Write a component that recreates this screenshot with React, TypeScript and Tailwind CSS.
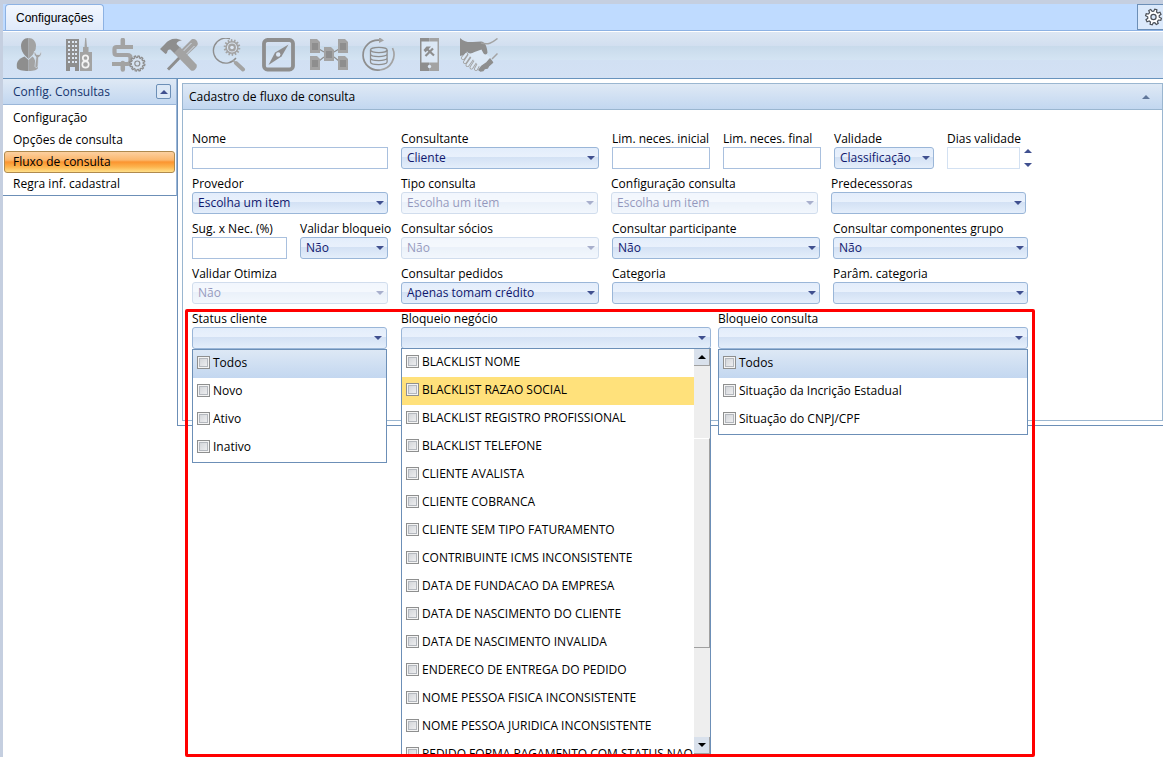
import { useState, type ReactNode } from 'react';
import clsx from 'clsx';

const DARK = '#8e8e8e';
const LIGHT = '#a3a3a3';

// Gear outline shared by the toolbar icons and the settings button
const gearPath = (cx: number, cy: number, outer: number, inner: number, teeth: number) => {
  const points: string[] = [];
  for (let i = 0; i < teeth; i++) {
    const base = (i / teeth) * Math.PI * 2;
    const step = (Math.PI * 2) / teeth;
    [
      [inner, 0.05],
      [outer, 0.2],
      [outer, 0.55],
      [inner, 0.7],
    ].forEach(([r, f]) => {
      const a = base + f * step;
      points.push(`${(cx + r * Math.cos(a)).toFixed(2)} ${(cy + r * Math.sin(a)).toFixed(2)}`);
    });
  }
  return `M${points.join('L')}Z`;
};

const ToolIcon = ({ children }: { children: ReactNode }) => (
  <svg width="38" height="34" viewBox="0 0 38 34" fill="none" aria-hidden="true">
    {children}
  </svg>
);

const docs = [
  [0, 1],
  [28, 1],
  [14, 9],
  [0, 18],
  [28, 18],
];

const tools: { name: string; icon: ReactNode }[] = [
  {
    name: 'Usuários',
    icon: (
      <ToolIcon>
        <path d="M18.500 0C14 0 11 3.500 11 8c0 4 2 7.500 4 9.500l3.500 3.500z" fill={DARK} />
        <path d="M18.500 0c4.500 0 7.500 3.500 7.500 8 0 4-2 7.500-4 9.500L18.500 21z" fill={LIGHT} />
        <path d="M18.500 33C12 33 8 32 7 30c-1-6 1-9 7.500-11.500l4 3.500z" fill={DARK} />
        <path d="M18.500 33c6 0 8.500-1 9.500-3l-4-10-1.500-1.500-4 3.500z" fill={LIGHT} />
        <path d="M24.500 13c-1 3 0 5 1.500 6l-1 9c0 2 2.500 2 3 0l.500-8.500c2.500-1 3.500-3.500 2.500-6.500l-1.500 3.500h-3z" fill={LIGHT} stroke="#d6e2f0" strokeWidth="0.700" />
      </ToolIcon>
    ),
  },
  {
    name: 'Empresas',
    icon: (
      <ToolIcon>
        <path d="M6 1h13v32h-4v-4h-5v4H6z" fill={DARK} />
        <path d="M20 14h3V9h1.500l.700-9h1l.800 9H28.500v5H32v19H20z" fill={LIGHT} />
        {[0, 1, 2, 3, 4, 5].map((row) =>
          [8, 12, 15].map((x) => (
            <rect key={`${row}-${x}`} x={x} y={3 + row * 4} width="2" height="2" fill="#dce6f2" />
          )),
        )}
        <circle cx="25.500" cy="20" r="2.700" stroke="#f4f4f4" strokeWidth="1.700" />
        <circle cx="25.500" cy="26.500" r="3.200" stroke="#f4f4f4" strokeWidth="1.700" />
      </ToolIcon>
    ),
  },
  {
    name: 'Financeiro',
    icon: (
      <ToolIcon>
        <path d="M12.800 2V8.500M12.800 25V31.500" stroke={LIGHT} strokeWidth="4.500" strokeLinecap="round" />
        <path d="M23 9H6.500Q4.500 9 4.500 11v3.500Q4.500 17 7 17h10.500Q20.500 17 20.500 19.500v3Q20.500 26 17.500 26H2" stroke={LIGHT} strokeWidth="4.200" />
        <path d={gearPath(27.3, 25.5, 7.6, 6, 12)} fill="#d6e2f0" stroke={DARK} strokeWidth="1.300" />
        <circle cx="27.300" cy="25.500" r="2.500" stroke={DARK} strokeWidth="1.200" />
      </ToolIcon>
    ),
  },
  {
    name: 'Ferramentas',
    icon: (
      <ToolIcon>
        <path d="M8 31.500 25 14" stroke={DARK} strokeWidth="3" />
        <path d="M19 14 31.500 1.500c3-1.500 6 1 6.300 4 0 1-.400 2-1 2.600L24 20z" fill={LIGHT} />
        <path d="m23 13.500 8.500-8.500M26 16.500l8.500-8.500" stroke="#d6e2f0" strokeWidth="0.900" />
        <path d="M0 11 5 6C9 1 15-1 22 2.500c-3 0-5 1.500-5.500 3.500l4 4-6 5.500-4-4c-2-.500-3 .500-3.500 3.500L5.500 16z" fill={DARK} />
        <path d="m14 15 6-6L36.500 26.500c1.500 3-2.500 7.500-5.500 6z" fill={LIGHT} />
      </ToolIcon>
    ),
  },
  {
    name: 'Pesquisa',
    icon: (
      <ToolIcon>
        <path d="M20 .800A12.500 12.500 0 1 0 26 20" stroke={DARK} strokeWidth="1.400" />
        <path d={gearPath(22, 9.5, 8.4, 6.4, 14)} fill={LIGHT} />
        <circle cx="22" cy="9.500" r="4.500" stroke="#dce6f2" strokeWidth="1.100" />
        <circle cx="22" cy="9.500" r="1.800" fill="#dce6f2" />
        <path d="m22.500 22 3 3" stroke={LIGHT} strokeWidth="1.500" />
        <path d="m26 25 7 6.500" stroke={LIGHT} strokeWidth="4" strokeLinecap="round" />
      </ToolIcon>
    ),
  },
  {
    name: 'Navegação',
    icon: (
      <ToolIcon>
        <rect x="4" y="2" width="29" height="29.500" rx="3.500" stroke={DARK} strokeWidth="3.800" />
        <path d="M8.500 27 15 14.500 28.500 6.500 21.500 18.500z" fill={DARK} />
        <circle cx="18.200" cy="16.500" r="2.200" fill="#dce8f5" />
      </ToolIcon>
    ),
  },
  {
    name: 'Fluxos',
    icon: (
      <ToolIcon>
        <path d="M9 11 14 14M24 14l5-3M9 23l5-4M24 19l5 4" stroke={DARK} strokeWidth="1.200" />
        {docs.map(([x, y]) => (
          <g key={`${x}-${y}`}>
            <path d={`M${x} ${y}h7l3 3v11H${x}z`} fill={LIGHT} />
            <path d={`M${x + 2} ${y + 4}h6v7h-6z`} fill={DARK} />
          </g>
        ))}
      </ToolIcon>
    ),
  },
  {
    name: 'Banco de dados',
    icon: (
      <ToolIcon>
        <path d="M19.500 2.200A15 15 0 1 0 20 32" stroke={DARK} strokeWidth="1.700" />
        <path d="M20 32A15.500 15.500 0 0 0 32.500 10" stroke={LIGHT} strokeWidth="1.700" />
        <path d="m19-1 5 3.500L19 5z" fill={LIGHT} />
        <ellipse cx="18.800" cy="12" rx="8.300" ry="2.600" stroke={DARK} strokeWidth="1.300" />
        <path d="M10.500 12v12c0 3.500 16.600 3.500 16.600 0V12M10.500 16c0 3.500 16.600 3.500 16.600 0M10.500 20c0 3.500 16.600 3.500 16.600 0" stroke={DARK} strokeWidth="1.300" />
      </ToolIcon>
    ),
  },
  {
    name: 'Dispositivos',
    icon: (
      <ToolIcon>
        <path d="M10 0h9.500v33H10z" fill={DARK} />
        <path d="M19.500 0H29v33h-9.500z" fill={LIGHT} />
        <path d="M11.500 3.500h16v21h-16z" fill="#dce8f5" />
        <circle cx="19.500" cy="28.500" r="1.700" fill="#dce8f5" />
        <path d="m15.500 18 7.500-7.500M16.500 10.500l7.500 7" stroke={DARK} strokeWidth="2.200" />
        <path d="m13.500 12 3-3.500h4.500l-5.500 6z" fill={DARK} />
      </ToolIcon>
    ),
  },
  {
    name: 'Parcerias',
    icon: (
      <ToolIcon>
        <path d="m6 16-3 4M9 18l-4 6M12.500 20 7.500 27M16 22.500 11.500 29.500M19 25.500 16 31" stroke={LIGHT} strokeWidth="4" strokeLinecap="round" />
        <path d="m6 16-3 4M9 18l-4 6M12.500 20 7.500 27M16 22.500 11.500 29.500M19 25.500 16 31" stroke="#dce8f5" strokeWidth="2.200" strokeLinecap="round" />
        <path d="M8 16 20 11l12 10-12 8z" fill="#dce8f5" />
        <path d="M0 0c4 3.500 8 4.500 13 4l8-.500c4 0 6 5 6.500 11-.500 2.500-3.500 2.500-4.500 0l-1.500-3-7 2.500c-3 2-6 2-7.500-.500L3.500 17 0 18z" fill={DARK} />
        <path d="M21 5c7 2 11 0 16.500-4.500M37.500 15.500 32 21" stroke={LIGHT} strokeWidth="1.500" />
        <path d="m19 32 3-4 5-3.500 3-3.500 2.500 3.500-4 3.500-1 2-3 .500-1.500 2-2.500.500z" fill={DARK} stroke={DARK} strokeWidth="1.500" strokeLinejoin="round" />
      </ToolIcon>
    ),
  },
];

const menuItems = ['Configuração', 'Opções de consulta', 'Fluxo de consulta', 'Regra inf. cadastral'];

const statusOptions = ['Todos', 'Novo', 'Ativo', 'Inativo'];

const businessOptions = [
  'BLACKLIST NOME',
  'BLACKLIST RAZAO SOCIAL',
  'BLACKLIST REGISTRO PROFISSIONAL',
  'BLACKLIST TELEFONE',
  'CLIENTE AVALISTA',
  'CLIENTE COBRANCA',
  'CLIENTE SEM TIPO FATURAMENTO',
  'CONTRIBUINTE ICMS INCONSISTENTE',
  'DATA DE FUNDACAO DA EMPRESA',
  'DATA DE NASCIMENTO DO CLIENTE',
  'DATA DE NASCIMENTO INVALIDA',
  'ENDERECO DE ENTREGA DO PEDIDO',
  'NOME PESSOA FISICA INCONSISTENTE',
  'NOME PESSOA JURIDICA INCONSISTENTE',
  'PEDIDO FORMA PAGAMENTO COM STATUS NAO',
];

const queryOptions = ['Todos', 'Situação da Incrição Estadual', 'Situação do CNPJ/CPF'];

const Arrow = ({ up = false, className = '' }: { up?: boolean; className?: string }) => (
  <svg width="8" height="4" viewBox="0 0 8 4" className={className} aria-hidden="true">
    <path d={up ? 'M0 4 4 0l4 4z' : 'M0 0h8L4 4z'} fill="currentColor" />
  </svg>
);

interface FieldProps {
  id: string;
  label: string;
  width: string;
}

const FieldLabel = ({ id, label }: { id: string; label: string }) => (
  <label htmlFor={id} className="block h-[15px] whitespace-nowrap leading-[14px]">
    {label}
  </label>
);

const TextField = ({ id, label, width }: FieldProps) => (
  <div className={width}>
    <FieldLabel id={id} label={label} />
    <input id={id} type="text" className="block h-[22px] w-full border border-[#a9c0de] bg-white px-1 outline-none" />
  </div>
);

const SelectField = ({ id, label, width, value = '', disabled = false }: FieldProps & { value?: string; disabled?: boolean }) => (
  <div className={width}>
    <FieldLabel id={id} label={label} />
    <div className={clsx('relative', disabled && 'opacity-45')}>
      <select
        id={id}
        disabled={disabled}
        defaultValue={value}
        className="block h-[22px] w-full appearance-none rounded-[3px] border border-[#9ab6d8] pl-[5px] text-[#10186e] opacity-100 outline-none [background-image:linear-gradient(#e3edfb,#e9f1fc_45%,#d3e1f4_46%,#e4eefb)]"
      >
        <option value={value}>{value}</option>
      </select>
      <Arrow className="pointer-events-none absolute top-[9px] right-1 text-[#40508f]" />
    </div>
  </div>
);

interface CheckListProps extends FieldProps {
  options: string[];
  headed?: boolean;
  highlighted?: string;
  scrolling?: boolean;
}

const CheckListField = ({ id, label, width, options, headed, highlighted, scrolling }: CheckListProps) => {
  const [checked, setChecked] = useState<string[]>([]);

  const toggle = (option: string) => {
    setChecked(checked.includes(option) ? checked.filter((item) => item !== option) : [...checked, option]);
  };

  return (
    <div className={clsx('relative', width)}>
      <FieldLabel id={id} label={label} />
      <button
        id={id}
        type="button"
        aria-haspopup="listbox"
        aria-expanded="true"
        className="flex h-[22px] w-full items-center justify-end rounded-[3px] border border-[#9ab6d8] pr-1 text-[#40508f] [background-image:linear-gradient(#e3edfb,#e9f1fc_45%,#d3e1f4_46%,#e4eefb)]"
      >
        <Arrow />
      </button>
      <div
        className={clsx(
          'absolute top-full left-0 z-10 flex w-full border border-[#6c8fb7] bg-white',
          scrolling && '-mt-px h-[408px] overflow-hidden',
        )}
      >
        <ul className="min-w-0 flex-1">
          {options.map((option, index) => (
            <li
              key={option}
              className={clsx(
                'h-7',
                headed && index === 0 && 'bg-linear-to-b from-[#dde8f5] to-[#c3d7f0]',
                option === highlighted && 'bg-[#ffe17b]',
              )}
            >
              <label className="flex h-[25px] items-center gap-[3px] pl-1 whitespace-nowrap">
                <input
                  type="checkbox"
                  checked={checked.includes(option)}
                  onChange={() => toggle(option)}
                  className="size-[13px] shrink-0 appearance-none border border-[#8e8f8f] bg-linear-to-br from-[#cdd0d5] to-[#f4f4f5] shadow-[inset_0_0_0_1px_#f4f4f4,inset_0_0_0_2px_#b4b8be] checked:bg-[#4b6ea8]"
                />
                {option}
              </label>
            </li>
          ))}
        </ul>
        {scrolling && (
          <div className="flex w-4 flex-col bg-[#eeeeee]">
            <span className="flex h-[17px] items-center justify-center border-r border-b border-[#a0a0a0] bg-[#d9e1ec] text-black">
              <Arrow up />
            </span>
            <span className="mt-[72px] h-[210px] border-t border-r border-b border-t-white border-r-[#a0a0a0] border-b-[#a0a0a0] bg-[#eeeeee]" />
            <span className="mt-[89px] flex h-[17px] items-center justify-center border-r border-b border-[#a0a0a0] bg-[#d9e1ec] text-black">
              <Arrow />
            </span>
          </div>
        )}
      </div>
    </div>
  );
};

const Toolbar = () => (
  <div className="flex h-12 border-t border-b border-t-white border-b-[#6893bd] pl-px [background-image:linear-gradient(#dde7f3,#d2dff0_30%,#c8daeb_31%,#d4e4f3_61%,#d1e0f3_62%,#d3e1f4)]">
    {tools.map((tool) => (
      <button key={tool.name} type="button" aria-label={tool.name} className="flex w-[50px] items-center justify-center">
        {tool.icon}
      </button>
    ))}
  </div>
);

const Sidebar = ({ active, onSelect }: { active: string; onSelect: (item: string) => void }) => (
  <aside className="w-[174px] shrink-0 self-start border-r border-b border-[#6c8fb7] border-r-[#9ab6d8]">
    <div className="flex h-[26px] items-center justify-between border-b border-[#9ab6d8] bg-linear-to-b from-[#dfe9f5] to-[#c2d7f0] pr-[5px] pl-[10px] text-[#15356e]">
      <span>Config. Consultas</span>
      <button
        type="button"
        aria-label="Recolher menu"
        className="flex size-[15px] items-center justify-center rounded-[2px] border border-[#6c8fb7] bg-[#dce8f6] text-[#40508f]"
      >
        <Arrow up />
      </button>
    </div>
    <nav className="px-px pt-[2px]">
      {menuItems.map((item) => (
        <a
          key={item}
          href="#"
          onClick={() => onSelect(item)}
          className={clsx(
            'block h-[22px] rounded-[3px] border pl-2 leading-5',
            item === active
              ? 'border-[#b08a4e] [background-image:linear-gradient(#fcd0a0,#fbb76d_40%,#fb9430_50%,#fdb54f_75%,#ffe08a)]'
              : 'border-transparent',
          )}
        >
          {item}
        </a>
      ))}
    </nav>
  </aside>
);

const QueryForm = () => (
  <form className="flex flex-col gap-2 pt-[22px] pb-[71px] pl-[9px]">
    <div className="flex gap-[13px]">
      <TextField id="nome" label="Nome" width="w-[196px]" />
      <SelectField id="consultante" label="Consultante" width="w-[198px]" value="Cliente" />
      <TextField id="lim-inicial" label="Lim. neces. inicial" width="w-[98px]" />
      <TextField id="lim-final" label="Lim. neces. final" width="w-[98px]" />
      <SelectField id="validade" label="Validade" width="w-[100px]" value="Classificação" />
      <div className="w-[84px]">
        <FieldLabel id="dias" label="Dias validade" />
        <div className="flex gap-1">
          <input id="dias" type="text" className="block h-[22px] w-[73px] border border-[#d3e1f2] bg-white px-1 outline-none" />
          <div className="flex flex-col justify-between py-[2px] text-[#40508f]">
            <button type="button" aria-label="Aumentar" className="flex">
              <Arrow up />
            </button>
            <button type="button" aria-label="Diminuir" className="flex">
              <Arrow />
            </button>
          </div>
        </div>
      </div>
    </div>
    <div className="flex gap-[13px]">
      <SelectField id="provedor" label="Provedor" width="w-[196px]" value="Escolha um item" />
      <SelectField id="tipo" label="Tipo consulta" width="w-[197px]" value="Escolha um item" disabled />
      <SelectField id="config" label="Configuração consulta" width="w-[207px]" value="Escolha um item" disabled />
      <SelectField id="predecessoras" label="Predecessoras" width="w-[195px]" />
    </div>
    <div className="flex gap-[13px]">
      <TextField id="sugestao" label="Sug. x Nec. (%)" width="w-[95px]" />
      <SelectField id="bloqueio" label="Validar bloqueio" width="w-[88px]" value="Não" />
      <SelectField id="socios" label="Consultar sócios" width="w-[198px]" value="Não" disabled />
      <SelectField id="participante" label="Consultar participante" width="w-[208px]" value="Não" />
      <SelectField id="componentes" label="Consultar componentes grupo" width="w-[195px]" value="Não" />
    </div>
    <div className="flex gap-[13px]">
      <SelectField id="otimiza" label="Validar Otimiza" width="w-[196px]" value="Não" disabled />
      <SelectField id="pedidos" label="Consultar pedidos" width="w-[198px]" value="Apenas tomam crédito" />
      <SelectField id="categoria" label="Categoria" width="w-[208px]" />
      <SelectField id="param-categoria" label="Parâm. categoria" width="w-[195px]" />
    </div>
    <div className="relative flex gap-[14px] self-start">
      <CheckListField id="status-cliente" label="Status cliente" width="w-[195px]" options={statusOptions} headed />
      <div className="flex gap-[7px]">
        <CheckListField
          id="bloqueio-negocio"
          label="Bloqueio negócio"
          width="w-[310px]"
          options={businessOptions}
          highlighted="BLACKLIST RAZAO SOCIAL"
          scrolling
        />
        <CheckListField id="bloqueio-consulta" label="Bloqueio consulta" width="w-[310px]" options={queryOptions} headed />
      </div>
      {/* Red frame around the multi-select filters */}
      <div className="pointer-events-none absolute -top-[3px] -right-[7px] -left-[7px] z-20 h-[448px] rounded-[2px] border-[3px] border-[#ff0000]" />
    </div>
  </form>
);

const App = () => {
  const [active, setActive] = useState('Fluxo de consulta');

  return (
    <div className="h-screen overflow-hidden border-t-4 border-l-[3px] border-[#c5cfe0] bg-white font-['Segoe_UI','Open_Sans',sans-serif] text-[12px] text-black">
      <div className="flex h-[27px] items-end justify-between border-b border-[#8db2e3] bg-[#bfdbff]">
        <button
          type="button"
          className="ml-[2px] h-[26px] rounded-t-[4px] border border-b-0 border-[#8db2e3] bg-linear-to-b from-[#f2f7fe] to-[#e0eafa] px-[10px] font-['Liberation_Sans',sans-serif]"
        >
          Configurações
        </button>
        <button
          type="button"
          aria-label="Preferências"
          className="flex h-[26px] w-[26px] items-center justify-end border border-r-0 border-[#6c8fb7] bg-[#dbe9fb]"
        >
          <svg width="19" height="18" viewBox="0 0 19 18" fill="none" aria-hidden="true">
            <path d={gearPath(9.5, 9, 8, 5.8, 8)} fill="#ffffff" stroke="#4a4f57" strokeWidth="1.200" />
            <circle cx="9.500" cy="9" r="2.600" fill="#dbe9fb" stroke="#4a4f57" strokeWidth="1.200" />
          </svg>
        </button>
      </div>
      <Toolbar />
      <div className="flex">
        <Sidebar active={active} onSelect={setActive} />
        <main className="min-w-0 flex-1 border-b border-l border-[#6c8fb7] pt-1 pb-1 pl-1">
          <section className="border border-[#9ab6d0]">
            <header className="flex h-[26px] items-center justify-between border-b border-[#9ab6d0] bg-linear-to-b from-[#dfe9f5] to-[#c2d7f0] pr-3 pl-[6px]">
              <h1>Cadastro de fluxo de consulta</h1>
              <Arrow up className="text-[#60779a]" />
            </header>
            <QueryForm />
          </section>
        </main>
      </div>
    </div>
  );
};

export default App;
